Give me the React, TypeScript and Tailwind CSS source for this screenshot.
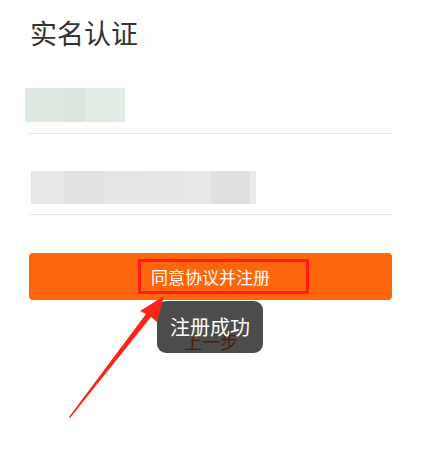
import React from 'react';

const nameBlur = [
  { w: 39, c: 'bg-[#dce8e0]' },
  { w: 21, c: 'bg-[#d9e5dd]' },
  { w: 40, c: 'bg-[#e0ece4]' },
];

const idBlur = [
  { w: 33, c: 'bg-[#e8e8e8]' },
  { w: 40, c: 'bg-[#e2e2e2]' },
  { w: 40, c: 'bg-[#e5e5e5]' },
  { w: 40, c: 'bg-[#e6e6e6]' },
  { w: 27, c: 'bg-[#e8e8e8]' },
  { w: 39, c: 'bg-[#e0e0e0]' },
  { w: 6, c: 'bg-[#ebebeb]' },
];

const App: React.FC = () => {
  return (
    <div
      className="relative w-[422px] h-[449px] bg-white overflow-hidden"
      style={{ fontFamily: '"Noto Sans CJK SC", "Noto Sans", sans-serif' }}
    >
      <div className="px-[30px] pt-[17px]">
        <h1 className="text-[27px] leading-[32px] text-[#333333] font-normal">实名认证</h1>

        {/* name field */}
        <div className="mt-[39px] -ml-[5px] flex h-[34px]">
          {nameBlur.map((b, i) => (
            <div key={i} className={b.c} style={{ width: b.w }} />
          ))}
        </div>
        <div className="mt-[11px] h-px bg-[#e8e8e8] -ml-px" />

        {/* id field */}
        <div className="mt-[37px] ml-px flex h-[33px]">
          {idBlur.map((b, i) => (
            <div key={i} className={b.c} style={{ width: b.w }} />
          ))}
        </div>
        <div className="mt-[10px] h-px bg-[#e8e8e8] -ml-px" />

        {/* submit */}
        <button className="mt-[38px] -ml-px w-[363px] h-[47px] rounded-[4px] bg-[#ff650d] flex items-center justify-center text-[17px] text-white leading-none">
          同意协议并注册
        </button>

        <div className="mt-[30px] text-center text-[18px] leading-[22px] text-[#ff650d]">上一步</div>
      </div>

      {/* annotation box */}
      <div className="absolute left-[138px] top-[259px] w-[171px] h-[35px] border-[3px] border-[#ff1e12]" />

      {/* toast */}
      <div className="absolute left-[157px] top-[301px] w-[106px] h-[52px] rounded-[9px] bg-black/70 flex items-center justify-center text-white text-[20px] leading-none">
        注册成功
      </div>

      {/* annotation arrow */}
      <svg className="absolute left-0 top-0" width="422" height="449" viewBox="0 0 422 449">
        <polygon
          points="69,417 146,314 140,311 164,296 157,322 151,317 70,418"
          fill="#ff2418"
        />
      </svg>
    </div>
  );
};

export default App;
